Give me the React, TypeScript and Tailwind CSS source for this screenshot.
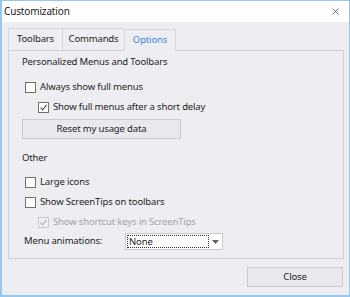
import { X } from "lucide-react";

const font = { fontFamily: '"Segoe UI", "Noto Sans", "Open Sans", sans-serif' };

function Check({ checked, disabled, label, indent }: { checked?: boolean; disabled?: boolean; label: string; indent: string }) {
  return (
    <div className={`flex items-center h-[14px] ${indent}`}>
      <div
        className={`w-[11px] h-[11px] border flex items-center justify-center shrink-0 ${
          disabled ? "border-[#c9c8ce] bg-[#f0eff3]" : "border-[#707070] bg-white"
        }`}
      >
        {checked && (
          <svg width="9" height="9" viewBox="0 0 9 9">
            <path d="M1.5 4.6 L3.6 6.8 L7.6 1.8" fill="none" stroke={disabled ? "#b4b4b8" : "#555"} strokeWidth="1.1" />
          </svg>
        )}
      </div>
      <span className={`ml-[4px] leading-none ${disabled ? "text-[#a3a2a8]" : "text-[#1e1e1e]"}`}>{label}</span>
    </div>
  );
}

export default function App() {
  return (
    <div
      className="w-[350px] h-[297px] flex flex-col border border-[#94c8f0] border-l-2 border-b-2 bg-[#eeedf2] overflow-hidden text-[9.5px] tracking-[-0.15px]"
      style={font}
    >
      {/* Title bar */}
      <div className="h-[21px] bg-white flex items-center justify-between pl-[2px] pr-[8px] shrink-0">
        <span className="text-[10px] text-[#1a1a1a]">Customization</span>
        <X className="w-[11px] h-[11px] text-[#333]" strokeWidth={1.4} />
      </div>

      {/* Body */}
      <div className="flex-1 flex flex-col pl-[6px] pr-[4px] pt-[6px]">
        {/* Tabs */}
        <div className="flex h-[22px]">
          <div className="w-[54px] border-t border-l border-[#d6d5dc] flex items-center justify-center text-[#1e1e1e]">Toolbars</div>
          <div className="w-[62px] border-t border-l border-[#d6d5dc] flex items-center justify-center text-[#1e1e1e]">Commands</div>
          <div className="w-[52px] border-t border-l border-r border-[#d6d5dc] flex items-center justify-center text-[#3c88d8] relative top-[1px] bg-[#eeedf2]">
            Options
          </div>
        </div>

        {/* Panel */}
        <div className="h-[209px] w-[336px] border border-[#d0cfd7] flex flex-col pl-[13px] pt-[4px] text-[#1e1e1e]">
          <div className="h-[14px] flex items-center">Personalized Menus and Toolbars</div>
          <div className="mt-[11px]">
            <Check indent="ml-[3px]" label="Always show full menus" />
          </div>
          <div className="mt-[6px]">
            <Check indent="ml-[16px]" checked label="Show full menus after a short delay" />
          </div>
          <button className="mt-[5px] w-[159px] h-[20px] bg-[#e9e8ed] border border-[#cbcad1] text-[#1e1e1e] flex items-center justify-center">
            Reset my usage data
          </button>
          <div className="mt-[12px] h-[14px] flex items-center">Other</div>
          <div className="mt-[10px]">
            <Check indent="ml-[3px]" label="Large icons" />
          </div>
          <div className="mt-[6px]">
            <Check indent="ml-[3px]" label="Show ScreenTips on toolbars" />
          </div>
          <div className="mt-[6px]">
            <Check indent="ml-[16px]" checked disabled label="Show shortcut keys in ScreenTips" />
          </div>
          <div className="mt-[4px] flex items-center h-[17px]">
            <span className="ml-[2px] w-[101px]">Menu animations:</span>
            <div className="w-[98px] h-[17px] bg-white border border-[#c9c8d0] flex items-center pl-[1px]">
              <div className="w-[82px] h-[13px] border border-dotted border-[#333] flex items-center pl-[1px] leading-none">None</div>
              <div className="flex-1 flex items-center justify-center">
                <svg width="7" height="4" viewBox="0 0 7 4">
                  <path d="M0 0 H7 L3.5 4 Z" fill="#606060" />
                </svg>
              </div>
            </div>
          </div>
        </div>

        {/* Footer */}
        <div className="flex justify-end mt-[8px] pr-[2px]">
          <button className="w-[96px] h-[20px] bg-[#e9e8ed] border border-[#cbcad1] text-[#1e1e1e] flex items-center justify-center">
            Close
          </button>
        </div>
      </div>
    </div>
  );
}
